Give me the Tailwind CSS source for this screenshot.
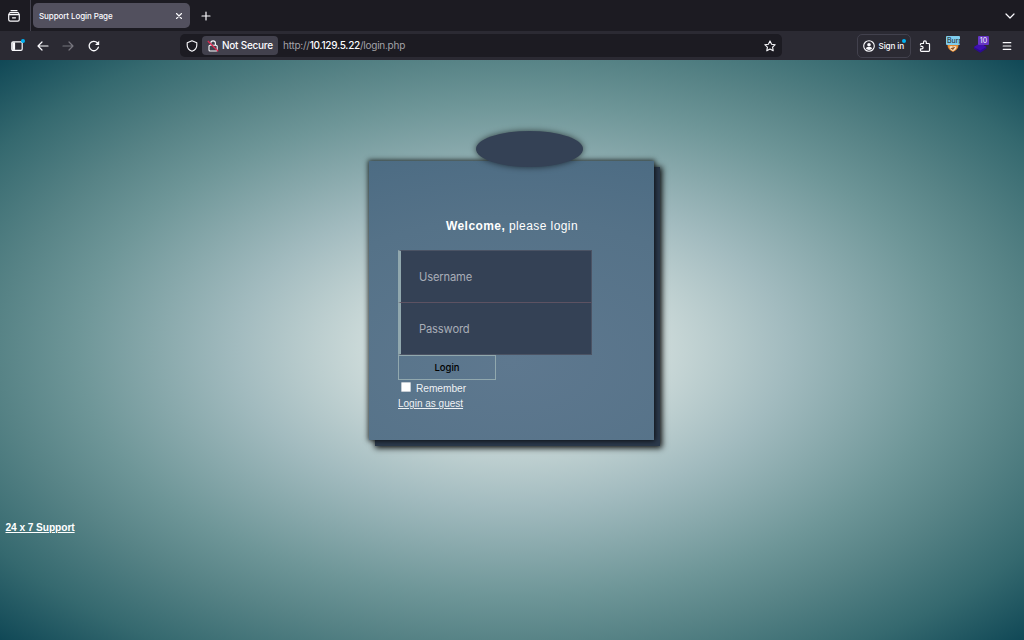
<!DOCTYPE html>
<html lang="en">
  <head>
    <meta charset="UTF-8" />
    <meta name="viewport" content="width=device-width, initial-scale=1.0" />
    <title>Support Login Page</title>
    <script src="https://cdn.jsdelivr.net/npm/@tailwindcss/browser@4"></script>
  </head>
  <body class="flex flex-col h-screen overflow-hidden bg-[#1c1b22] font-['Liberation_Sans',Arial,sans-serif]">
    <!-- tab strip -->
    <header class="flex items-center h-[31px] shrink-0 text-[#fbfbfe] font-[Inter,sans-serif]">
      <div class="flex items-center justify-center w-[31px] h-full pr-[2px] border-r border-[#42414d]">
        <svg class="w-3.5 h-3.5" viewBox="0 0 14 14" fill="none" stroke="currentColor" stroke-width="1.2" stroke-linecap="round" stroke-linejoin="round">
          <path d="M4 1.7h6" />
          <path d="M1.700 5.500l.7-1.300q.3-.6.9-.6h7.400q.6 0 .9.600l.7 1.300v5.100q0 1.600-1.600 1.600H3.300q-1.600 0-1.600-1.600zM1.700 5.700h10.600M5.500 8.800h3" />
        </svg>
      </div>
      <div class="flex items-center justify-between w-[157px] h-[25px] ml-[2px] pl-[6px] pr-[7px] rounded-[5px] bg-[#52505e]">
        <span class="pt-px text-[8px] font-medium tracking-[-0.1px]">Support Login Page</span>
        <svg class="w-2 h-2" viewBox="0 0 8 8" fill="none" stroke="currentColor" stroke-width="1.1" stroke-linecap="round">
          <path d="M1.5 1.5l5 5M6.5 1.5l-5 5" />
        </svg>
      </div>
      <svg class="w-2.5 h-2.5 ml-[11px]" viewBox="0 0 10 10" fill="none" stroke="currentColor" stroke-width="1.2" stroke-linecap="round">
        <path d="M5 1v8M1 5h8" />
      </svg>
      <svg class="w-2.5 h-2.5 ml-auto mr-[9px]" viewBox="0 0 10 10" fill="none" stroke="currentColor" stroke-width="1.2" stroke-linecap="round" stroke-linejoin="round">
        <path d="M1 3l4 4 4-4" />
      </svg>
    </header>

    <!-- toolbar -->
    <nav class="flex items-center h-[29px] shrink-0 pl-[11px] pr-[12px] bg-[#2b2a33] text-[#fbfbfe] font-[Inter,sans-serif]">
      <div class="relative">
        <svg class="w-3 h-3" viewBox="0 0 12 12" fill="none" stroke="currentColor" stroke-width="1.2">
          <rect x=".8" y="1.8" width="10.4" height="8.6" rx="1.3" />
          <path d="M1.3 2.3h2.8v7.6H1.3z" fill="currentColor" stroke="none" />
        </svg>
        <span class="absolute -top-[1px] -right-[2px] w-1 h-1 rounded-full bg-[#00b3f4]"></span>
      </div>
      <svg class="w-3 h-3 ml-[14px]" viewBox="0 0 12 12" fill="none" stroke="currentColor" stroke-width="1.2" stroke-linecap="round" stroke-linejoin="round">
        <path d="M11 6H1M5 2L1 6l4 4" />
      </svg>
      <svg class="w-3 h-3 ml-[13px] text-[#77767e]" viewBox="0 0 12 12" fill="none" stroke="currentColor" stroke-width="1.2" stroke-linecap="round" stroke-linejoin="round">
        <path d="M1 6h10M7 2l4 4-4 4" />
      </svg>
      <svg class="w-3 h-3 ml-[14px]" viewBox="0 0 12 12" fill="none" stroke="currentColor" stroke-width="1.3" stroke-linecap="round">
        <path d="M10.4 7.2A4.7 4.7 0 1 1 9.3 2.8L10.2 3.7" />
        <path d="M11.2 .8v4.1H7.1z" fill="currentColor" stroke="none" />
      </svg>

      <div class="flex items-center w-[602px] h-[23px] ml-[80px] pl-[6px] pr-[6px] rounded-[5px] bg-[#1c1b22]">
        <svg class="w-3 h-3" viewBox="0 0 12 12" fill="none" stroke="currentColor" stroke-width="1.1" stroke-linejoin="round">
          <path d="M6 .8l4.8 1.9v2.5c0 2.7-1.8 5-4.8 6.1C3 10.2 1.2 7.9 1.2 5.2V2.7z" />
        </svg>
        <div class="flex items-center w-[76px] h-[19px] ml-1 pl-[5px] rounded-[4px] bg-[#42414d]">
          <svg class="w-3 h-3" viewBox="0 0 12 12" fill="none" stroke="currentColor" stroke-width="1.1">
            <path d="M3.8 5V3.200a2.300 2.300 0 0 1 4.600 0V5" />
            <rect x="2" y="5.200" width="8.200" height="5.800" rx="1" />
            <path d="M.8 1l10.400 10.200" stroke="#e22850" stroke-width="1.200" />
          </svg>
          <span class="ml-[3px] text-[10px] font-medium tracking-[-0.25px] whitespace-nowrap">Not Secure</span>
        </div>
        <span class="ml-[5px] text-[10px] tracking-[-0.25px] text-[#a3a2a8] whitespace-nowrap">http://<span class="text-[#fbfbfe] font-medium">10.129.5.22</span>/login.php</span>
        <svg class="w-3 h-3 ml-auto" viewBox="0 0 12 12" fill="none" stroke="currentColor" stroke-width="1.1" stroke-linejoin="round">
          <path d="M6 .9l1.600 3.300 3.600.5-2.600 2.500.6 3.600L6 9.100l-3.200 1.700.6-3.600L.8 4.700l3.600-.5z" />
        </svg>
      </div>

      <div class="relative flex items-center w-[54px] h-[24px] ml-auto pl-[5px] border border-[#42414d] rounded-[5px]">
        <svg class="w-3 h-3 shrink-0" viewBox="0 0 12 12" fill="none" stroke="currentColor">
          <circle cx="6" cy="6" r="5.3" stroke-width="1.1" />
          <circle cx="6" cy="4.7" r="1.8" fill="currentColor" stroke="none" />
          <path d="M2.9 8.5c.4-1.1 1.3-1.4 3.1-1.4s2.700.3 3.1 1.400C8.300 9.400 7.200 9.900 6 9.900s-2.300-.5-3.100-1.400z" fill="currentColor" stroke="none" />
        </svg>
        <span class="ml-[3.500px] pt-px text-[8.200px] font-medium tracking-[-0.150px] whitespace-nowrap">Sign in</span>
        <span class="absolute top-[4px] right-[4px] w-1 h-1 rounded-full bg-[#00b3f4]"></span>
      </div>
      <svg class="w-3 h-3 ml-[8px]" viewBox="0 0 12 12" fill="none" stroke="currentColor" stroke-width="1.2" stroke-linejoin="round">
        <path d="M1.500 5.200V4.300q0-.8.800-.8h2.200V2.300a1.400 1.400 0 0 1 2.800 0v1.200h2.400q.8 0 .8.800v6.200q0 .8-.8.800H2.300q-.8 0-.8-.8V8.900h1.300a1.300 1.300 0 0 0 0-2.600H1.500" />
      </svg>
      <div class="relative w-[14px] h-[18px] ml-[15px]">
        <svg class="w-full h-full" viewBox="0 0 14 18">
          <path d="M1.500 7h11q.3 5.500-5.500 8Q1.200 12.500 1.500 7z" fill="#e68a2e" />
          <path d="M3.500 9.500q2-1.200 3.500.3 1.500-1.500 3.500-.3 0 3.300-3.500 4.500-3.500-1.200-3.500-4.500z" fill="#f4dfc3" />
          <path d="M4.300 11.300l5-1.500-2.300 3.200z" fill="#8b5223" />
        </svg>
        <span class="absolute -top-px left-0 w-[14px] h-[9px] overflow-hidden rounded-[1px] bg-[#80cdee] pl-[1px] text-[7px] leading-[9px] text-[#15141a]">Burp</span>
      </div>
      <div class="relative w-[15px] h-[18px] ml-[14px]">
        <svg class="w-[13px] h-full" viewBox="0 0 13 18">
          <path d="M0 10l6.200-4 6.200 4v1.700l-6.200 4-6.200-4z" fill="#2c0b91" />
          <path d="M0 10l6.200-4 6.200 4-6.200 3.500z" fill="#3f10b0" />
        </svg>
        <span class="absolute -top-px right-0 w-[11px] h-[9px] rounded-[1px] bg-[#6536c4] text-center text-[7px] leading-[9px]">10</span>
      </div>
      <svg class="w-2.5 h-2.5 ml-[13px]" viewBox="0 0 10 10" stroke="currentColor" stroke-width="1.200" stroke-linecap="round">
        <path d="M1.200 1.700h7.600M1.200 5h7.600M1.200 8.300h7.600" />
      </svg>
    </nav>

    <!-- page -->
    <main class="relative grow bg-[radial-gradient(ellipse_at_center,#eef5ee_0%,#ccdad9_20%,#a2bbbf_38%,#6e9698_60%,#578386_71%,#35696f_86%,#104856_100%)]">
      <section class="relative w-[285px] h-[279px] mt-[101px] ml-[369px] pt-[58px] pl-[29px] bg-[radial-gradient(400px_240px_at_50%_72%,#5e788f_0%,#557288_60%,#4a6a82_100%)] shadow-[0_0_5px_1px_rgba(0,0,0,0.75),6px_6px_0_#2b394b,7px_7px_6px_1px_rgba(0,0,0,0.95)]">
        <div class="absolute -top-[30px] left-[107px] w-[107px] h-[36px] rounded-[50%] bg-[#344155] shadow-[0_0_6px_rgba(0,0,0,0.6)]"></div>
        <h1 class="pl-[48px] text-[12px] leading-[14px] tracking-[0.420px] text-white"><b>Welcome,</b> please login</h1>
        <form class="flex flex-col items-start mt-[17px]">
          <input class="block w-[194px] h-[53px] pl-[18px] border border-l-[3px] border-[#4b5364] border-l-[#91a8ae] bg-[#344155] font-[Inter,sans-serif] text-[11.200px] tracking-[-0.160px] placeholder:text-[#a8adb7]" placeholder="Username" />
          <input class="block w-[194px] h-[53px] -mt-[1px] pl-[18px] border border-l-[3px] border-[#4b5364] border-t-[#5d5262] border-l-[#91a8ae] bg-[#344155] font-[Inter,sans-serif] text-[11.200px] tracking-[-0.160px] placeholder:text-[#a8adb7]" type="password" placeholder="Password" />
          <button class="w-[98px] h-[25px] pt-px border border-[#91a8ae] font-[Inter,sans-serif] text-[9.500px] font-medium text-black">Login</button>
          <label class="flex items-center h-[15px] pl-[3px] text-[10.200px] leading-[15px] tracking-[-0.050px] text-[#eef1f4]">
            <input type="checkbox" class="appearance-none w-[10px] h-[10px] mb-[2px] mr-[5px] rounded-[1px] border border-[#c5ccd3] bg-white" /><span class="pt-px">Remember</span>
          </label>
          <a href="#" class="pt-px text-[10px] leading-[16px] text-[#eef1f4] underline">Login as guest</a>
        </form>
      </section>
      <a href="#" class="block w-fit mt-[81px] ml-[5.500px] text-[10.200px] leading-[14px] tracking-[-0.080px] font-bold text-white underline">24 x 7 Support</a>
    </main>
  </body>
</html>
